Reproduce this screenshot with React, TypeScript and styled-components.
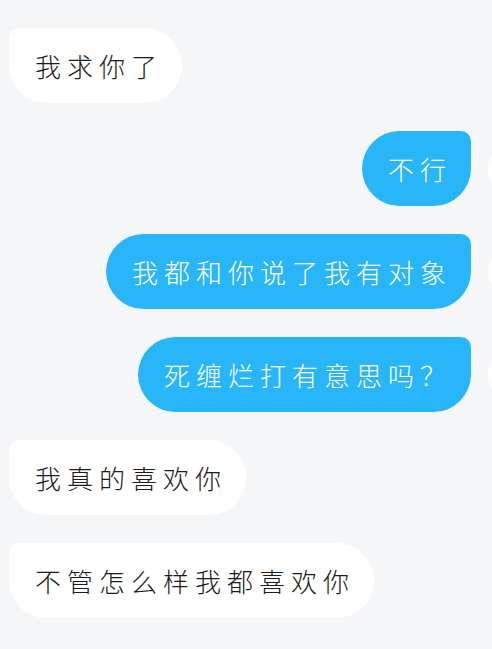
import styled, { createGlobalStyle } from "styled-components";

const GlobalStyle = createGlobalStyle`
    html, body {
        margin: 0;
        padding: 0;
        background-color: #f5f6f8;
        overflow: hidden;
    }
    body {
        font-family: "Noto Sans CJK SC", "Noto Sans", sans-serif;
    }
`

const ChatStyled = styled.main`
    display: flex;
    flex-direction: column;
    gap: 28px;
    padding: 28px 0 0 9px;
    width: 492px;
    height: 649px;
    box-sizing: border-box;
    overflow: hidden;
`

const Row = styled.div<{ $mine?: boolean }>`
    display: flex;
    align-items: center;
    justify-content: ${({ $mine }) => ($mine ? "flex-end" : "flex-start")};
    gap: 17px;
    margin-right: ${({ $mine }) => ($mine ? "-46px" : "0")};
`

const Bubble = styled.div<{ $mine?: boolean }>`
    height: 75px;
    display: flex;
    align-items: center;
    padding: 0 19px 0 26px;
    box-sizing: border-box;
    font-size: 26px;
    font-weight: 300;
    letter-spacing: 6px;
    white-space: nowrap;
    border-radius: 37.5px;
    ${({ $mine }) =>
        $mine
            ? `
        background-color: #29b6f8;
        color: #ffffff;
        border-top-right-radius: 10px;
    `
            : `
        background-color: #ffffff;
        color: #1c1c1c;
        border-top-left-radius: 10px;
    `}
`

const Avatar = styled.div`
    width: 50px;
    height: 50px;
    border-radius: 50%;
    background-color: #ffffff;
    flex-shrink: 0;
`

interface Mensagem {
    texto: string;
    meu: boolean;
}

const mensagens: Mensagem[] = [
    { texto: "我求你了", meu: false },
    { texto: "不行", meu: true },
    { texto: "我都和你说了我有对象", meu: true },
    { texto: "死缠烂打有意思吗？", meu: true },
    { texto: "我真的喜欢你", meu: false },
    { texto: "不管怎么样我都喜欢你", meu: false },
]

export default function App() {
    return (
        <>
            <GlobalStyle />
            <ChatStyled>
                {mensagens.map((m, i) => (
                    <Row key={i} $mine={m.meu}>
                        <Bubble $mine={m.meu}>{m.texto}</Bubble>
                        {m.meu && <Avatar />}
                    </Row>
                ))}
            </ChatStyled>
        </>
    )
}
